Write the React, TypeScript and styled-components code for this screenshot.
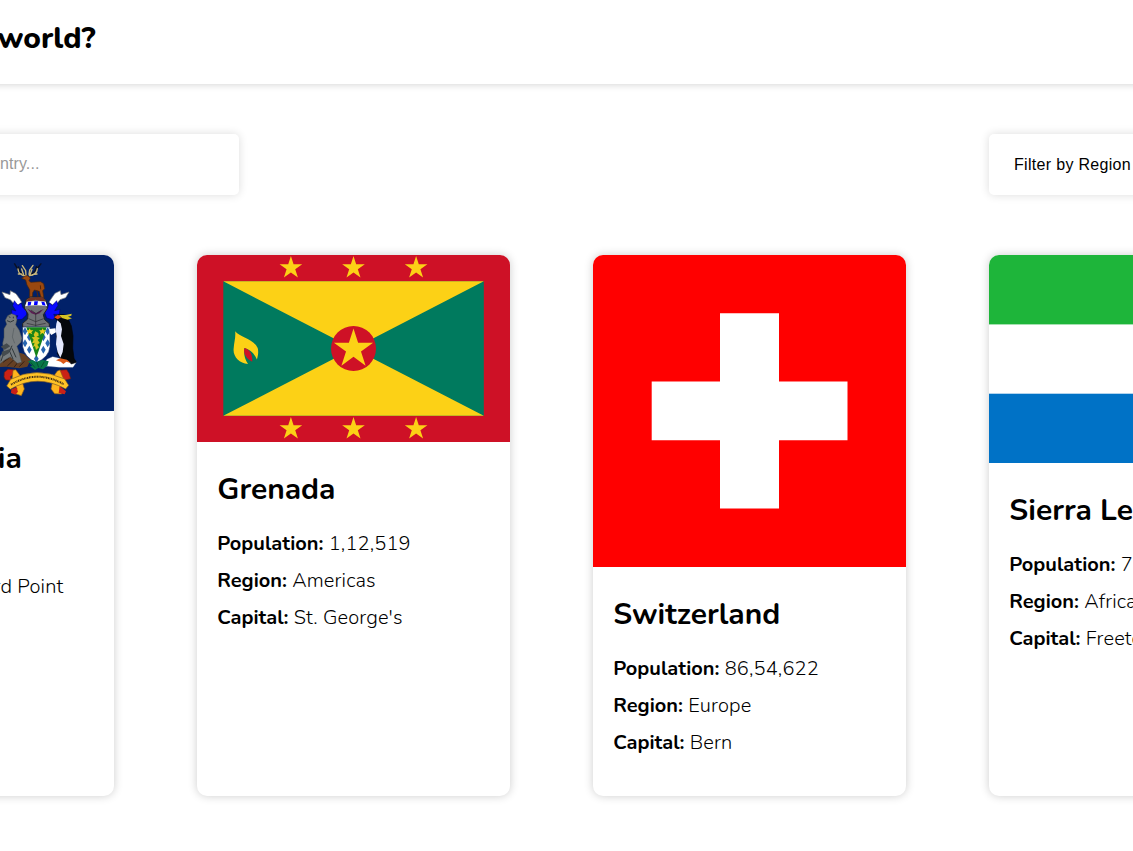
import React from "react";
import styled, { createGlobalStyle } from "styled-components";

const GlobalStyle = createGlobalStyle`
  *, *::before, *::after { box-sizing: border-box; }
  body {
    margin: 0;
    background: #fff;
    color: #000;
    font-family: Nunito, "Noto Sans", sans-serif;
    overflow: hidden;
  }
`;

const Viewport = styled.div`
  width: 100%;
  height: 851px;
  overflow: hidden;
`;

const Page = styled.div`
  width: 1501px;
  margin-left: -199px;
`;

const Header = styled.header`
  height: 84px;
  padding-top: 18px;
  box-shadow: 0 0 8px rgba(0, 0, 0, 0.2);
`;

const Brand = styled.h1`
  width: 294.5px;
  margin: 0;
  display: flex;
  justify-content: flex-end;
  white-space: nowrap;
  font-size: 30px;
  line-height: 41px;
  font-weight: 800;
`;

const Toolbar = styled.div`
  display: flex;
  justify-content: space-between;
  padding-top: 50px;
`;

const Field = styled.div<{ $width: number }>`
  display: flex;
  align-items: center;
  width: ${(p) => p.$width}px;
  height: 61px;
  border-radius: 5px;
  background: #fff;
  box-shadow: 0 0 10px rgba(0, 0, 0, 0.14);
  font-family: "Liberation Sans", Arial, sans-serif;
  font-size: 16px;
  letter-spacing: 0.31px;
  white-space: nowrap;
`;

const Search = styled(Field)`
  justify-content: flex-end;
  padding: 0 199.5px 2px 0;
  letter-spacing: 0.1px;
  color: #999;
`;

const Filter = styled(Field)`
  padding-left: 25px;
`;

const Grid = styled.main`
  display: grid;
  grid-template-columns: repeat(4, 313px);
  column-gap: 83px;
  padding-top: 60px;
`;

const Card = styled.article`
  height: 541px;
  border-radius: 10px;
  overflow: hidden;
  background: #fff;
  box-shadow: 0 0 10px rgba(0, 0, 0, 0.2);
`;

const Flag = styled.svg<{ $height: number }>`
  display: block;
  width: 313px;
  height: ${(p) => p.$height}px;
`;

const Details = styled.div`
  padding: 27px 20.3px 0;
`;

const Name = styled.h2`
  margin: 0 0 20px;
  font-size: 30px;
  line-height: 41px;
  font-weight: 700;
  white-space: nowrap;
`;

const Fact = styled.p`
  margin: 0 0 10px;
  font-size: 20px;
  line-height: 27px;
  font-weight: 300;
  letter-spacing: 0.16px;
  white-space: nowrap;
`;

const Label = styled.b`
  font-weight: 700;
  letter-spacing: 0;
`;

const STAR =
  "M0,-1 L0.2245,-0.309 L0.951,-0.309 L0.3633,0.118 L0.5878,0.809 L0,0.382 L-0.5878,0.809 L-0.3633,0.118 L-0.951,-0.309 L-0.2245,-0.309 Z";

const lozenges = [
  [75, 244], [143, 244],
  [88, 262], [130, 262],
  [75, 280], [143, 280],
  [88, 299], [130, 299],
  [109, 326],
];

function SouthGeorgiaFlag() {
  return (
    <Flag $height={156} viewBox="0 0 313 156">
      <rect width="313" height="156" fill="#012169" />
      <g transform="translate(199 -5) scale(0.33333)">
        {/* stag and antlers */}
        <g fill="none" stroke="#0a1022" strokeWidth="4">
          <path d="M76 76C61 71 52 57 43 40M88 76C103 69 112 55 124 40M60 66L55 49M104 66L110 48" />
        </g>
        <g fill="none" stroke="#c9b77c" strokeWidth="4" strokeLinecap="round">
          <path d="M78 78C64 77 55 69 54 57M64 72L55 72M71 75L65 57M78 76L77 62L67 47M88 77C102 76 111 68 112 56M97 74L111 72M90 74L96 58M87 73L89 60L99 46" />
        </g>
        <path d="M65 85L75 78L83 77L91 84L87 92L92 97L122 95L131 101L134 116L128 122L132 146L124 146L118 124L103 120L98 128L97 146L89 146L89 119L81 105L77 90Z" fill="#9a480f" stroke="#4d2407" strokeWidth="2" />
        <path d="M110 121L115 145M122 118L121 106" stroke="#572507" strokeWidth="3" />
        {/* helmet, plumes and mantling */}
        <path d="M6 126L30 134L31 122L48 131L60 148L65 157L54 165L39 158L31 149L15 143Z" fill="#fff" stroke="#777" strokeWidth="2" />
        <path d="M207 126L183 134L181 122L165 130L153 147L147 157L158 165L173 158L180 149L197 143Z" fill="#fff" stroke="#777" strokeWidth="2" />
        <path d="M43 152L54 166L64 159L68 172L80 184L79 195L66 208L47 209L54 197L36 197L35 179L48 183L38 167Z" fill="#0909ff" stroke="#00006b" strokeWidth="1.5" />
        <path d="M170 152L157 166L148 159L143 174L133 185L140 204L157 209L166 204L161 193L178 193L180 178L164 182L174 166Z" fill="#0909ff" stroke="#00006b" strokeWidth="1.5" />
        <path d="M73 174L79 148L92 141L127 142L138 151L142 176L130 194L134 209L148 221V233H68V220L83 207L84 192Z" fill="#707276" stroke="#222" strokeWidth="3" />
        <path d="M78 153L87 143L127 141L137 152L123 154L107 149L91 154Z" fill="#743322" />
        <path d="M75 169L80 155Q108 151 137 155L142 169Q108 163 75 169Z" fill="#fff" />
        <path d="M84 156L94 155L92 166L83 167ZM103 154L114 154L112 165L102 165ZM124 155L133 156L137 167L127 165Z" fill="#0000ff" />
        <path d="M82 176L108 190L132 176L119 190L107 194L94 190Z" fill="#5b1d52" />
        <path d="M93 180L108 191L124 181M107 192V229M86 206L107 215L131 206M80 220L107 226L137 220" fill="none" stroke="#2c2d30" strokeWidth="2" />
        {/* rocky ground and tussock */}
        <path d="M0 318L48 305L72 312L92 330L82 350L58 355L19 350L0 351Z" fill="#664024" />
        <path d="M9 337L28 323M22 348L48 323M42 352L60 329M58 350L73 334" stroke="#352015" strokeWidth="3" />
        <path d="M128 348L141 328L158 320L178 325L213 337L229 337L219 352L178 352L145 349Z" fill="#fff" stroke="#9daabd" />
        {/* shield */}
        <path d="M68 231H150V290Q147 322 109 338Q73 322 68 290Z" fill="#fff" stroke="#162e6a" strokeWidth="2" />
        {lozenges.map(([x, y]) => (
          <path key={`${x}-${y}`} d={`M${x} ${y - 12}l7 12l-7 12l-7-12Z`} fill="#2865b1" />
        ))}
        <path d="M79 232H140L109 323Z" fill="#17841a" />
        <path d="M89 235L92 241L100 241L94 247L97 253L89 249L82 254L84 246L79 241H86ZM128 235L131 241L138 241L132 247L134 253L127 249L120 254L122 246L117 241H125Z" fill="#efcc20" />
        <path d="M106 244L115 249L116 257L109 260L120 264L113 270L119 278L112 284L117 292L108 300L105 288L99 292L104 278L96 280L101 269L95 262L104 261L101 254Z" fill="#d6c51f" />
        <path d="M84 334L97 330L109 336L128 330L146 334L142 347L129 358L115 354L105 360L90 349L97 347Z" fill="#087748" />
        <path d="M92 337L105 353M110 336L116 352M133 335L123 352" stroke="#06502f" strokeWidth="3" />
        {/* seal */}
        <path d="M16 211L23 197L35 191L47 196L51 209L47 224L58 241L66 265L63 277L51 289L56 303L62 326L65 337L52 340L31 321L14 330L0 341V320L11 303L8 280L12 262L12 236L20 223Z" fill="#777c7e" stroke="#454c4f" strokeWidth="1.5" />
        <path d="M21 212L31 216L42 211M27 199L31 204M40 200L40 205M36 287L29 303L8 318L3 334M36 295L48 322M28 302L39 327" fill="none" stroke="#30383b" strokeWidth="3" />
        <path d="M42 234L37 261L44 280" fill="none" stroke="#555c5f" strokeWidth="2" />
        <path d="M2 290L20 280L31 289L14 299ZM5 305L31 297L26 310L7 321Z" fill="#454b4e" />
        {/* penguin */}
        <path d="M163 202L176 194L193 194L205 208L214 228L219 258L218 295L222 325L229 337L214 342L204 331L185 329L172 311L176 286L169 259L169 237L177 218Z" fill="#05070b" stroke="#02040a" strokeWidth="2" />
        <path d="M172 211L182 220L186 238L183 258L191 282L188 306L181 323L173 307L168 283L170 259L167 239L169 221Z" fill="#e5e9ff" />
        <path d="M162 202L174 194L184 202L173 208Z" fill="#e14b16" />
        <path d="M177 195L197 195L215 191L214 197L204 200L216 205L203 209L186 204Z" fill="#d5c323" />
        <path d="M147 237L166 235L168 247L154 255L149 248Z" fill="#fff" />
        <path d="M168 331L181 325L201 329L212 339L199 335L190 342L182 335Z" fill="#dc5a19" />
        {/* motto scroll */}
        <path d="M13 367L24 358L41 359L43 371L31 380L35 391L17 390L12 381ZM179 361L200 359L207 370L212 386L193 391L183 382Z" fill="#ca2116" stroke="#642116" strokeWidth="2" />
        <path d="M39 361L47 359L62 379L73 417L64 437L46 431L51 416L35 391L37 381ZM180 360L172 363L161 379L153 417L164 431L185 432L180 413L194 392L188 380Z" fill="#ffb51d" stroke="#8b5a19" strokeWidth="2" />
        <path d="M34 418L49 412L54 425L46 434L33 429ZM179 408L198 424L194 433L176 429Z" fill="#ca2116" />
        <path d="M20 408L32 388Q108 348 194 387L206 406L197 417Q111 370 31 418Z" fill="#ffc326" stroke="#75542a" strokeWidth="2" />
        <path d="M33 404Q110 357 192 403" fill="none" stroke="#453016" strokeWidth="6" strokeDasharray="3 1.5 2 2 4 2" />
      </g>
    </Flag>
  );
}

function GrenadaFlag() {
  return (
    <Flag $height={187} viewBox="0 0 313 187">
      <rect width="313" height="187" fill="#ce1126" />
      <rect x="26.3" y="26.3" width="260.5" height="134.5" fill="#007a5e" />
      <path d="M26.3 26.3H286.8L26.3 160.8H286.8Z" fill="#fcd116" />
      <circle cx="156.5" cy="93.5" r="22.5" fill="#ce1126" />
      <path d={STAR} transform="translate(156.5 94) scale(20.6)" fill="#fcd116" />
      {[12.9, 173.9].map((y) =>
        [93.9, 156.5, 219.1].map((x) => (
          <path key={`${x}-${y}`} d={STAR} transform={`translate(${x} ${y}) scale(11.9)`} fill="#fcd116" />
        )),
      )}
      <path d="M38.2 76.2C42 82 56 83 60.7 93C61.7 97 61 101 59.9 104.5C57 97 51 94 47.4 93C46.7 99 47.5 104 51 109C42 108 35.5 101 36.7 93C37 87 38.8 83 38.2 76.2Z" fill="#fcd116" />
      <path d="M47.4 93C52 94 56 99 55.2 106.7C49.5 104 46 99 47.4 93Z" fill="#ce1126" />
    </Flag>
  );
}

function SwitzerlandFlag() {
  return (
    <Flag $height={312} viewBox="0 0 313 312">
      <rect width="313" height="312" fill="#f00" />
      <path d="M127 58.3H186V126.5H254.5V185.3H186V253.5H127V185.3H58.7V126.5H127Z" fill="#fff" />
    </Flag>
  );
}

function SierraLeoneFlag() {
  return (
    <Flag $height={208} viewBox="0 0 313 208">
      <rect width="313" height="208" fill="#fff" />
      <rect width="313" height="69.4" fill="#1eb53a" />
      <rect y="138.7" width="313" height="69.3" fill="#0072c6" />
    </Flag>
  );
}

const countries = [
  { name: "South Georgia", population: "30", region: "Antarctic", capital: "King Edward Point", FlagArt: SouthGeorgiaFlag },
  { name: "Grenada", population: "1,12,519", region: "Americas", capital: "St. George's", FlagArt: GrenadaFlag },
  { name: "Switzerland", population: "86,54,622", region: "Europe", capital: "Bern", FlagArt: SwitzerlandFlag },
  { name: "Sierra Leone", population: "79,76,985", region: "Africa", capital: "Freetown", FlagArt: SierraLeoneFlag },
];

export default function App() {
  return (
    <Viewport>
      <GlobalStyle />
      <Page>
        <Header>
          <Brand>Where in the world?</Brand>
        </Header>
        <Toolbar>
          <Search $width={438}>Search for a country...</Search>
          <Filter $width={313}>Filter by Region</Filter>
        </Toolbar>
        <Grid>
          {countries.map(({ name, population, region, capital, FlagArt }) => (
            <Card key={name}>
              <FlagArt />
              <Details>
                <Name>{name}</Name>
                <Fact><Label>Population:</Label> {population}</Fact>
                <Fact><Label>Region:</Label> {region}</Fact>
                <Fact><Label>Capital:</Label> {capital}</Fact>
              </Details>
            </Card>
          ))}
        </Grid>
      </Page>
    </Viewport>
  );
}
